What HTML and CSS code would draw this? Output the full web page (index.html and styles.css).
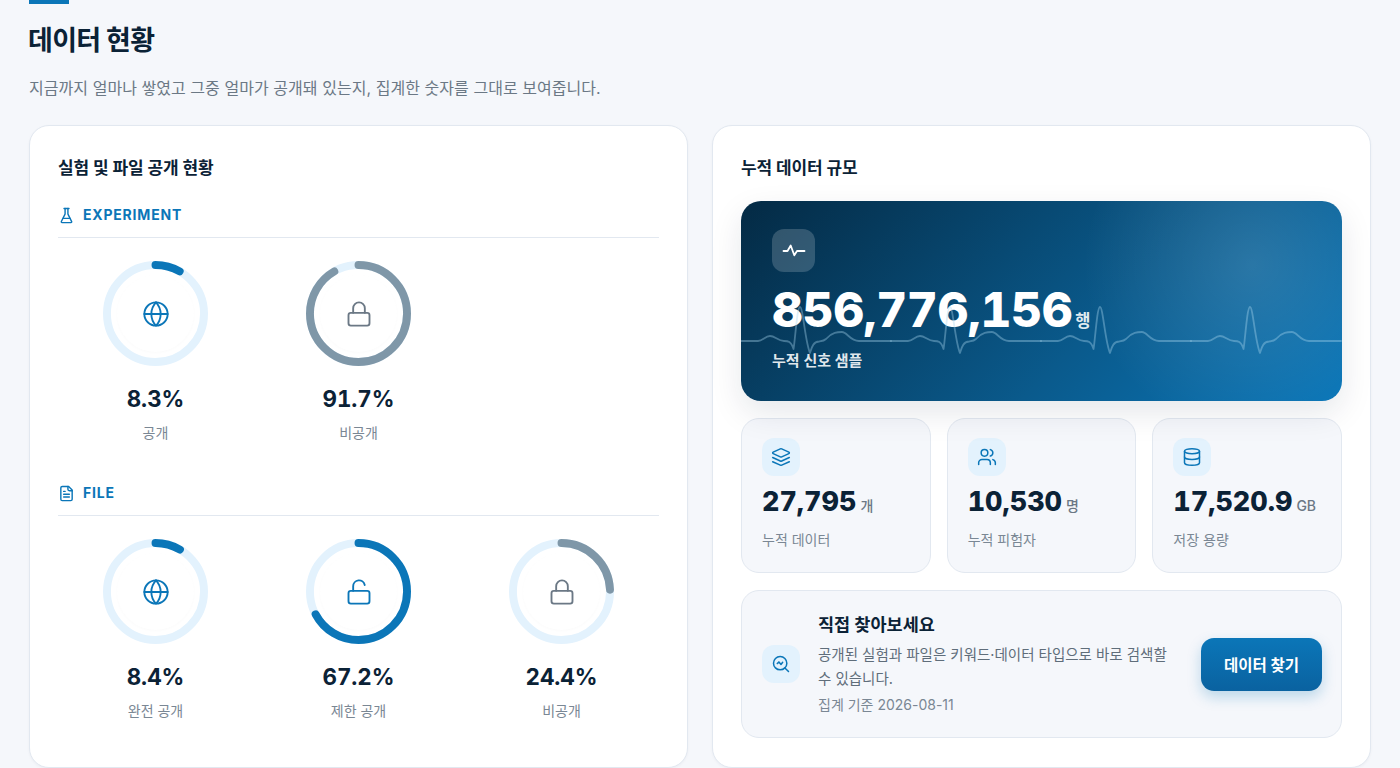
FILE: index.html
```html
<!DOCTYPE html>
<html lang="ko">
<head>
<meta charset="UTF-8" />
<meta name="viewport" content="width=device-width, initial-scale=1" />
<title>데이터 현황</title>
<link rel="stylesheet" href="styles.css">
</head>
<body>
<div class="container">
  <div class="accent"></div>
  <h1>데이터 현황</h1>
  <p class="lead">지금까지 얼마나 쌓였고 그중 얼마가 공개돼 있는지, 집계한 숫자를 그대로 보여줍니다.</p>

  <div class="columns">
    <section class="card">
      <h2>실험 및 파일 공개 현황</h2>

      <div class="group-title">
        <svg class="icon-17" viewBox="0 0 24 24"><path d="M10 2v7.527a2 2 0 0 1-.211.896L4.72 20.55a1 1 0 0 0 .9 1.45h12.76a1 1 0 0 0 .9-1.45l-5.069-10.127A2 2 0 0 1 14 9.527V2"/><path d="M8.5 2h7"/><path d="M7 16h10"/></svg>
        EXPERIMENT
      </div>
      <div class="rings">
        <div class="ring-item">
          <div class="ring">
            <svg class="ring-svg" viewBox="0 0 106 106"><circle class="track" cx="53" cy="53" r="49"/><circle class="arc" cx="53" cy="53" r="49" pathLength="100" stroke-dasharray="8.3 100"/></svg>
            <div class="ring-center blue"><svg class="icon-28" viewBox="0 0 24 24"><circle cx="12" cy="12" r="10"/><path d="M12 2a14.5 14.5 0 0 0 0 20 14.5 14.5 0 0 0 0-20"/><path d="M2 12h20"/></svg></div>
          </div>
          <div class="ring-value">8.3%</div>
          <div class="ring-label">공개</div>
        </div>
        <div class="ring-item">
          <div class="ring">
            <svg class="ring-svg" viewBox="0 0 106 106"><circle class="track" cx="53" cy="53" r="49"/><circle class="arc gray" cx="53" cy="53" r="49" pathLength="100" stroke-dasharray="91.7 100"/></svg>
            <div class="ring-center slate"><svg class="icon-28" viewBox="0 0 24 24"><rect x="3" y="11" width="18" height="11" rx="2"/><path d="M7 11V7a5 5 0 0 1 10 0v4"/></svg></div>
          </div>
          <div class="ring-value">91.7%</div>
          <div class="ring-label">비공개</div>
        </div>
      </div>

      <div class="group-title second">
        <svg class="icon-17" viewBox="0 0 24 24"><path d="M15 2H6a2 2 0 0 0-2 2v16a2 2 0 0 0 2 2h12a2 2 0 0 0 2-2V7Z"/><path d="M14 2v4a2 2 0 0 0 2 2h4"/><path d="M10 9H8"/><path d="M16 13H8"/><path d="M16 17H8"/></svg>
        FILE
      </div>
      <div class="rings">
        <div class="ring-item">
          <div class="ring">
            <svg class="ring-svg" viewBox="0 0 106 106"><circle class="track" cx="53" cy="53" r="49"/><circle class="arc" cx="53" cy="53" r="49" pathLength="100" stroke-dasharray="8.4 100"/></svg>
            <div class="ring-center blue"><svg class="icon-28" viewBox="0 0 24 24"><circle cx="12" cy="12" r="10"/><path d="M12 2a14.5 14.5 0 0 0 0 20 14.5 14.5 0 0 0 0-20"/><path d="M2 12h20"/></svg></div>
          </div>
          <div class="ring-value">8.4%</div>
          <div class="ring-label">완전 공개</div>
        </div>
        <div class="ring-item">
          <div class="ring">
            <svg class="ring-svg" viewBox="0 0 106 106"><circle class="track" cx="53" cy="53" r="49"/><circle class="arc" cx="53" cy="53" r="49" pathLength="100" stroke-dasharray="67.2 100"/></svg>
            <div class="ring-center blue"><svg class="icon-28" viewBox="0 0 24 24"><rect x="3" y="11" width="18" height="11" rx="2"/><path d="M7 11V7a5 5 0 0 1 9.9-1"/></svg></div>
          </div>
          <div class="ring-value">67.2%</div>
          <div class="ring-label">제한 공개</div>
        </div>
        <div class="ring-item">
          <div class="ring">
            <svg class="ring-svg" viewBox="0 0 106 106"><circle class="track" cx="53" cy="53" r="49"/><circle class="arc gray" cx="53" cy="53" r="49" pathLength="100" stroke-dasharray="24.4 100"/></svg>
            <div class="ring-center slate"><svg class="icon-28" viewBox="0 0 24 24"><rect x="3" y="11" width="18" height="11" rx="2"/><path d="M7 11V7a5 5 0 0 1 10 0v4"/></svg></div>
          </div>
          <div class="ring-value">24.4%</div>
          <div class="ring-label">비공개</div>
        </div>
      </div>
    </section>

    <section class="card">
      <h2>누적 데이터 규모</h2>

      <div class="hero">
        <div class="hero-icon"><svg class="icon-24" viewBox="0 0 24 24"><path d="M1.5 12H5.5L8.7 6.5L12.3 16.3L15 12H22.5"/></svg></div>
        <div class="hero-number">856,776,156<span class="hero-unit">행</span></div>
        <div class="hero-label">누적 신호 샘플</div>
        <svg class="ecg" viewBox="0 0 601 200">
          <defs>
            <path id="beat" d="M0 140H17C22 140 24 135 29 135C34 135 37 140 43 140C47 140 50 140 52.5 148C54 141 56 106 59 106C62 106 64 140 69 152C71 146 72 141 78 140.5C82 140 83 140 85 138C91 131 97 131 101 131C106 131 109 140 118 140H150"/>
          </defs>
          <use href="#beat"/>
          <use href="#beat" x="150"/>
          <use href="#beat" x="300"/>
          <use href="#beat" x="450"/>
        </svg>
      </div>

      <div class="stats">
        <div class="stat">
          <div class="tile"><svg class="icon-20" viewBox="0 0 24 24"><path d="m12.83 2.18a2 2 0 0 0-1.66 0L2.6 6.08a1 1 0 0 0 0 1.83l8.58 3.91a2 2 0 0 0 1.66 0l8.58-3.9a1 1 0 0 0 0-1.83Z"/><path d="m22 17.65-9.17 4.16a2 2 0 0 1-1.66 0L2 17.65"/><path d="m22 12.65-9.17 4.16a2 2 0 0 1-1.66 0L2 12.65"/></svg></div>
          <div class="stat-number">27,795<span class="stat-unit">개</span></div>
          <div class="stat-label">누적 데이터</div>
        </div>
        <div class="stat">
          <div class="tile"><svg class="icon-20" viewBox="0 0 24 24"><path d="M16 21v-2a4 4 0 0 0-4-4H6a4 4 0 0 0-4 4v2"/><circle cx="9" cy="7" r="4"/><path d="M22 21v-2a4 4 0 0 0-3-3.87"/><path d="M16 3.13a4 4 0 0 1 0 7.75"/></svg></div>
          <div class="stat-number">10,530<span class="stat-unit">명</span></div>
          <div class="stat-label">누적 피험자</div>
        </div>
        <div class="stat">
          <div class="tile"><svg class="icon-20" viewBox="0 0 24 24"><ellipse cx="12" cy="5" rx="9" ry="3"/><path d="M3 5V19A9 3 0 0 0 21 19V5"/><path d="M3 12A9 3 0 0 0 21 12"/></svg></div>
          <div class="stat-number">17,520.9<span class="stat-unit">GB</span></div>
          <div class="stat-label">저장 용량</div>
        </div>
      </div>

      <div class="cta">
        <div class="tile"><svg class="icon-20" viewBox="0 0 24 24"><circle cx="11" cy="11" r="8"/><path d="m21 21-4.3-4.3"/><path d="M7.5 11.5l2-2 2.5 3 2-2.5"/></svg></div>
        <div class="cta-text">
          <h3>직접 찾아보세요</h3>
          <p>공개된 실험과 파일은 키워드·데이터 타입으로 바로 검색할 수 있습니다.</p>
          <div class="cta-date">집계 기준 2026-08-11</div>
        </div>
        <a class="btn">데이터 찾기</a>
      </div>
    </section>
  </div>
</div>
</body>
</html>
```

FILE: styles.css
```css
* {
  box-sizing: border-box;
}
body {
  margin: 0;
  background: #f5f7fb;
  color: #0b2236;
  font-family: Inter, 'Noto Sans CJK KR', sans-serif;
  overflow: hidden;
}
.container {
  padding: 0 29px;
}
.accent {
  width: 40px;
  height: 4px;
  background: #0b76b8;
}
h1 {
  margin: 18px 0 0 -1px;
  font-size: 27px;
  line-height: 38px;
  font-weight: 700;
  letter-spacing: -.7px;
}
.lead {
  margin: 16px 0 0;
  font-size: 16px;
  line-height: 24px;
  letter-spacing: .05px;
  color: #6b7885;
}
.columns {
  display: grid;
  grid-template-columns: 1fr 1fr;
  gap: 24px;
  margin-top: 25px;
}
.card {
  height: 643px;
  padding: 28px;
  background: #fff;
  border: 1px solid #e2e8f0;
  border-radius: 20px;
  box-shadow: 0 1px 3px rgba(11, 34, 54, .04);
}
h2 {
  margin: 0;
  font-size: 17px;
  line-height: 28px;
  font-weight: 700;
  letter-spacing: -.1px;
}

/* svg icons */
svg {
  fill: none;
  stroke: currentColor;
  stroke-width: 2;
  stroke-linecap: round;
  stroke-linejoin: round;
}
.icon-17 { width: 17px; height: 17px; }
.icon-20 { width: 20px; height: 20px; stroke-width: 1.8; }
.icon-24 { width: 24px; height: 24px; stroke-width: 1.8; }
.icon-28 { width: 28px; height: 28px; stroke-width: 1.6; }

/* left card */
.group-title {
  display: flex;
  align-items: center;
  gap: 8px;
  margin-top: 23px;
  padding-bottom: 12px;
  border-bottom: 1px solid #e2e8f0;
  font-size: 14px;
  line-height: 20px;
  font-weight: 700;
  letter-spacing: .8px;
  color: #0b76b8;
}
.group-title.second {
  margin-top: 40px;
}
.rings {
  display: grid;
  grid-template-columns: repeat(3, 1fr);
  gap: 8px;
  margin-top: 23px;
}
.ring-item {
  display: flex;
  flex-direction: column;
  align-items: center;
}
.ring {
  position: relative;
  width: 105px;
  height: 105px;
}
.ring-svg {
  display: block;
  width: 105px;
  height: 105px;
  transform: rotate(-90deg);
}
.track {
  stroke: #e3f2fd;
  stroke-width: 8;
}
.arc {
  stroke: #0b76b8;
  stroke-width: 8;
}
.arc.gray {
  stroke: #7f97a8;
}
.ring-center {
  position: absolute;
  left: 14px;
  top: 14px;
  width: 77px;
  height: 77px;
  display: flex;
  align-items: center;
  justify-content: center;
  border-radius: 50%;
  background: #fff;
  box-shadow: 0 1px 3px rgba(11, 34, 54, .02);
}
.ring-center.blue { color: #0b76b8; }
.ring-center.slate { color: #6b7885; }
.ring-value {
  margin-top: 19px;
  font-size: 22.4px;
  line-height: 28px;
  font-weight: 700;
  font-variant-numeric: tabular-nums;
}
.ring-label {
  margin-top: 10px;
  font-size: 14px;
  line-height: 20px;
  color: #7a8794;
}

/* right card */
.hero {
  position: relative;
  height: 200px;
  margin-top: 19px;
  padding: 28px 31px;
  overflow: hidden;
  border-radius: 20px;
  color: #fff;
  background:
    radial-gradient(circle at 85% 32%, rgba(255, 255, 255, .13), rgba(255, 255, 255, 0) 32%),
    linear-gradient(135deg, #042a44 0%, #0a5a8c 60%, #0a76b8 100%);
  box-shadow: 0 12px 32px rgba(11, 34, 54, .1);
}
.ecg {
  position: absolute;
  left: 0;
  top: 0;
  width: 100%;
  height: 100%;
  stroke: rgba(170, 215, 240, .38);
  stroke-width: 1.8;
}
.hero-icon {
  width: 43px;
  height: 43px;
  display: flex;
  align-items: center;
  justify-content: center;
  border-radius: 12px;
  background: rgba(255, 255, 255, .18);
}
.hero-number {
  margin-top: 8px;
  font-size: 48px;
  line-height: 60px;
  font-weight: 800;
  letter-spacing: -.4px;
  font-variant-numeric: tabular-nums;
}
.hero-unit {
  margin-left: 3px;
  font-size: 16.5px;
  font-weight: 700;
  letter-spacing: 0;
  color: rgba(255, 255, 255, .9);
}
.hero-label {
  margin-top: -1px;
  font-size: 15px;
  line-height: 22px;
  font-weight: 600;
  color: rgba(255, 255, 255, .9);
}
.stats {
  display: grid;
  grid-template-columns: repeat(3, 1fr);
  gap: 16px;
  margin-top: 17px;
}
.stat {
  height: 155px;
  padding: 19px 20px;
  background: #f5f7fb;
  border: 1px solid #e2e8f0;
  border-radius: 18px;
}
.tile {
  flex: none;
  width: 38px;
  height: 38px;
  display: flex;
  align-items: center;
  justify-content: center;
  border-radius: 12px;
  background: #e3f2fd;
  color: #0b76b8;
}
.stat-number {
  margin-top: 8px;
  font-size: 27px;
  line-height: 36px;
  font-weight: 800;
  font-variant-numeric: tabular-nums;
}
.stat-unit {
  margin-left: 4px;
  font-size: 14px;
  font-weight: 500;
  color: #6b7885;
}
.stat-label {
  margin-top: 6px;
  font-size: 14px;
  line-height: 20px;
  color: #7a8794;
}
.cta {
  display: flex;
  align-items: center;
  gap: 18px;
  height: 148px;
  margin-top: 17px;
  padding: 0 19px 0 20px;
  background: #f5f7fb;
  border: 1px solid #e2e8f0;
  border-radius: 18px;
}
.cta-text {
  flex: 1;
  padding-bottom: 2px;
}
h3 {
  margin: 0;
  font-size: 17.5px;
  line-height: 26px;
  font-weight: 700;
}
.cta-text p {
  margin: 5px 0 0;
  font-size: 14.5px;
  line-height: 24px;
  color: #5f6d7a;
}
.cta-date {
  margin-top: 4px;
  font-size: 14px;
  line-height: 20px;
  color: #7a8794;
}
.btn {
  flex: none;
  width: 121px;
  height: 53px;
  display: flex;
  align-items: center;
  justify-content: center;
  border-radius: 13px;
  background: linear-gradient(180deg, #0b76b8, #0a62a0);
  box-shadow: 0 6px 14px rgba(11, 118, 184, .25);
  color: #fff;
  font-size: 15.5px;
  font-weight: 700;
}
```
